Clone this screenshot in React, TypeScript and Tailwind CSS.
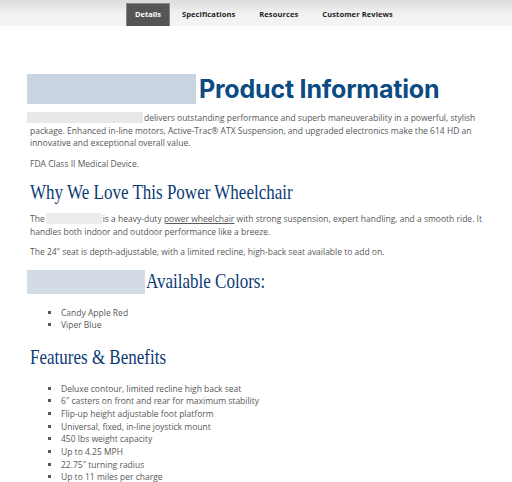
const tabs = ["Details", "Specifications", "Resources", "Customer Reviews"]

const colors = ["Candy Apple Red", "Viper Blue"]

const features = [
  "Deluxe contour, limited recline high back seat",
  "6\u2033 casters on front and rear for maximum stability",
  "Flip-up height adjustable foot platform",
  "Universal, fixed, in-line joystick mount",
  "450 lbs weight capacity",
  "Up to 4.25 MPH",
  "22.75\u2033 turning radius",
  "Up to 11 miles per charge",
]

const body = { fontFamily: '"Open Sans", "Liberation Sans", sans-serif' }
const serif = { fontFamily: '"Liberation Serif", "DejaVu Serif", serif' }

export default function App() {
  return (
    <div className="h-[482px] w-[512px] overflow-hidden bg-white" style={body}>
      <div className="flex h-[26px] bg-gradient-to-b from-[#dcdcdc] via-[#f1f1f1] to-[#f4f4f4] pl-[126px] pt-[3px]">
        {tabs.map((t, i) => (
          <div
            key={t}
            className={
              i === 0
                ? "flex h-[23px] w-[44px] items-center justify-center border border-b-0 border-[#888] bg-[#555] text-[7.5px] font-bold text-white"
                : "flex h-[23px] items-center px-[12px] text-[7.5px] font-bold tracking-[0.1px] text-[#222]"
            }
          >
            {t}
          </div>
        ))}
      </div>

      <div className="px-[27px] text-[8.5px] leading-[12.5px] text-[#585858]">
        <h1 className="mt-[48px] flex h-[30px] items-center">
          <span className="mr-[3px] inline-block h-[30px] w-[169px] bg-[#c8d4e0]" />
          <span
            className="text-[25px] font-bold tracking-[-0.2px] text-[#0b4a82]"
            style={{ fontFamily: '"Inter", "Open Sans", sans-serif' }}
          >
            Product Information
          </span>
        </h1>

        <p className="mt-[8px] pl-[3px]">
          <span className="-ml-[3px] mr-[1px] inline-block h-[11px] w-[116px] bg-[#e8e8e8] align-[-2px]" />
          delivers outstanding performance and superb maneuverability in a powerful, stylish package.
          Enhanced in-line motors, Active-Trac® ATX Suspension, and upgraded electronics make the 614
          HD an innovative and exceptional overall value.
        </p>
        <p className="mt-[8px] pl-[3px]">FDA Class II Medical Device.</p>

        <h2 className="mt-[10px] pl-[3px] text-[21px] leading-[24px] text-[#0c3a74]" style={serif}>
          <span className="inline-block origin-left scale-x-[0.81] whitespace-nowrap">
            Why We Love This Power Wheelchair
          </span>
        </h2>

        <p className="mt-[9px] pl-[3px]">
          The
          <span className="mx-[1px] inline-block h-[11px] w-[56px] bg-[#ececec] align-[-2px]" />
          is a heavy-duty <span className="underline">power wheelchair</span> with strong
          suspension, expert handling, and a smooth ride. It handles both indoor and outdoor
          performance like a breeze.
        </p>
        <p className="mt-[8px] pl-[3px]">
          The 24&quot; seat is depth-adjustable, with a limited recline, high-back seat available to
          add on.
        </p>

        <h2 className="mt-[11px] flex h-[24px] items-center text-[21px] text-[#0c3a74]" style={serif}>
          <span className="mr-[1px] inline-block h-[24px] w-[118px] shrink-0 bg-[#d3dbe5]" />
          <span className="inline-block origin-left scale-x-[0.81] whitespace-nowrap">
            Available Colors:
          </span>
        </h2>

        <ul className="mt-[13px] list-[square] pl-[34px]">
          {colors.map((c) => (
            <li key={c}>{c}</li>
          ))}
        </ul>

        <h2 className="mt-[13px] pl-[3px] text-[21px] leading-[24px] text-[#0c3a74]" style={serif}>
          <span className="inline-block origin-left scale-x-[0.81] whitespace-nowrap">
            Features &amp; Benefits
          </span>
        </h2>

        <ul className="mt-[14px] list-[square] pl-[34px] leading-[12.7px]">
          {features.map((f) => (
            <li key={f}>{f}</li>
          ))}
        </ul>
      </div>
    </div>
  )
}
